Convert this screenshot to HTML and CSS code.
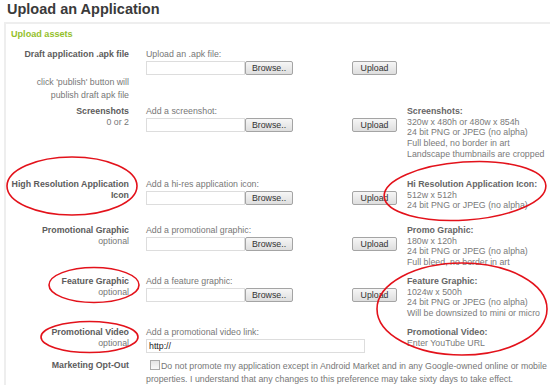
FILE: index.html
```html
<!DOCTYPE html>
<html lang="en">
<head>
  <meta charset="UTF-8" />
  <title>Upload an Application</title>
  <link rel="stylesheet" href="styles.css">
</head>
<body>
  <h1 class="page-title">Upload an Application</h1>

  <div class="panel">
    <h2 class="panel-title">Upload assets</h2>

    <div class="row row-apk">
      <div class="label">
        <b>Draft application .apk file</b>
        <p class="note">click 'publish' button will<br>publish draft apk file</p>
      </div>
      <div class="field">
        <div class="hint">Upload an .apk file:</div>
        <div class="file"><span class="file-box"></span><button class="btn btn-browse">Browse..</button></div>
      </div>
      <div class="action"><button class="btn btn-upload">Upload</button></div>
      <div class="info"></div>
    </div>

    <div class="row row-shots">
      <div class="label"><b>Screenshots</b><span>0 or 2</span></div>
      <div class="field">
        <div class="hint">Add a screenshot:</div>
        <div class="file"><span class="file-box"></span><button class="btn btn-browse">Browse..</button></div>
      </div>
      <div class="action"><button class="btn btn-upload">Upload</button></div>
      <div class="info">
        <b>Screenshots:</b>
        320w x 480h or 480w x 854h<br>
        24 bit PNG or JPEG (no alpha)<br>
        Full bleed, no border in art<br>
        Landscape thumbnails are cropped
      </div>
    </div>

    <div class="row row-icon">
      <div class="label"><b>High Resolution Application Icon</b></div>
      <div class="field">
        <div class="hint">Add a hi-res application icon:</div>
        <div class="file"><span class="file-box"></span><button class="btn btn-browse">Browse..</button></div>
      </div>
      <div class="action"><button class="btn btn-upload">Upload</button></div>
      <div class="info">
        <b>Hi Resolution Application Icon:</b>
        512w x 512h<br>
        24 bit PNG or JPEG (no alpha)
      </div>
    </div>

    <div class="row row-promo">
      <div class="label"><b>Promotional Graphic</b><span>optional</span></div>
      <div class="field">
        <div class="hint">Add a promotional graphic:</div>
        <div class="file"><span class="file-box"></span><button class="btn btn-browse">Browse..</button></div>
      </div>
      <div class="action"><button class="btn btn-upload">Upload</button></div>
      <div class="info">
        <b>Promo Graphic:</b>
        180w x 120h<br>
        24 bit PNG or JPEG (no alpha)<br>
        Full bleed, no border in art
      </div>
    </div>

    <div class="row row-feature">
      <div class="label"><b>Feature Graphic</b><span>optional</span></div>
      <div class="field">
        <div class="hint">Add a feature graphic:</div>
        <div class="file"><span class="file-box"></span><button class="btn btn-browse">Browse..</button></div>
      </div>
      <div class="action"><button class="btn btn-upload">Upload</button></div>
      <div class="info">
        <b>Feature Graphic:</b>
        1024w x 500h<br>
        24 bit PNG or JPEG (no alpha)<br>
        Will be downsized to mini or micro
      </div>
    </div>

    <div class="row row-video">
      <div class="label"><b>Promotional Video</b><span>optional</span></div>
      <div class="field field-wide">
        <div class="hint">Add a promotional video link:</div>
        <input class="text-box" type="text" value="http://">
      </div>
      <div class="info">
        <b>Promotional Video:</b>
        Enter YouTube URL
      </div>
    </div>

    <div class="row row-optout">
      <div class="label"><b>Marketing Opt-Out</b></div>
      <div class="optout">
        <span class="check"></span>Do not promote my application except in Android Market and in any Google-owned online or mobile<br>properties. I understand that any changes to this preference may take sixty days to take effect.
      </div>
    </div>
  </div>

  <svg class="marks" width="550" height="386" viewBox="0 0 550 386">
    <ellipse cx="72" cy="186" rx="65" ry="29" />
    <ellipse cx="465" cy="191" rx="81" ry="29" transform="rotate(-4 465 191)" />
    <ellipse cx="94" cy="285" rx="45" ry="17.5" />
    <ellipse cx="462" cy="309" rx="85" ry="46" />
    <ellipse cx="89.5" cy="337" rx="48.5" ry="15.5" />
  </svg>
</body>
</html>
```

FILE: styles.css
```css
body {
  margin: 0;
  padding: 0;
  background-color: #fff;
  color: #777;
  font-family: "Liberation Sans", Arial, sans-serif;
  font-size: 8.8px;
  line-height: 10.7px;
  position: relative;
}
.page-title {
  margin: 0;
  padding: 0 0 0 7px;
  font-size: 14.5px;
  line-height: 19px;
  color: #3a3a3a;
}
.panel {
  margin: 3px 0 0 4px;
  border-top: 2px solid #eee;
  border-left: 2px solid #eee;
  padding-top: 4px;
}
.panel-title {
  margin: 0 0 9px 5px;
  font-size: 9.1px;
  line-height: 12px;
  color: #94bf2b;
}
.row {
  display: grid;
  grid-template-columns: 140px 206px 55px 1fr;
  align-items: start;
}
.row-apk { height: 57px; }
.row-shots { height: 73px; }
.row-icon { height: 46px; }
.row-promo { height: 51px; }
.row-feature { height: 51px; }
.row-video { height: 33px; grid-template-columns: 140px 261px 1fr; }
.label {
  padding-right: 17px;
  text-align: right;
  color: #5c5c5c;
}
.label b,
.label span {
  display: block;
}
.label span {
  color: #777;
}
.note {
  margin: 16px 0 0 0;
  line-height: 13.5px;
  color: #777;
}
.field {
  display: flex;
  flex-direction: column;
  gap: 1px;
}
.file {
  display: flex;
}
.file-box {
  width: 97px;
  height: 12px;
  border: 1px solid #ddd;
  background-color: #fff;
}
.btn {
  height: 14px;
  padding: 0;
  border: 1px solid #a4a4a4;
  border-radius: 2px;
  background: linear-gradient(#f6f6f6, #dedede);
  color: #333;
  font-family: "Liberation Sans", Arial, sans-serif;
  font-size: 8.8px;
  line-height: 12px;
}
.btn-browse {
  width: 48px;
}
.action {
  padding-top: 12px;
}
.btn-upload {
  width: 45px;
}
.info {
  white-space: nowrap;
  color: #7a7a7a;
}
.info b {
  display: block;
  color: #666;
}
.text-box {
  width: 219px;
  height: 14px;
  box-sizing: border-box;
  margin: 0;
  padding: 0 2px;
  border: 1px solid #ddd;
  font-family: "Liberation Sans", Arial, sans-serif;
  font-size: 8.8px;
  color: #222;
}
.optout {
  grid-column: 2 / 5;
  white-space: nowrap;
  line-height: 12.5px;
}
.check {
  display: inline-block;
  width: 8px;
  height: 8px;
  margin: 0 1px 0 4px;
  vertical-align: -1px;
  border: 1px solid #aaa;
  background: linear-gradient(#e4e4e4, #f8f8f8);
}
.marks {
  position: absolute;
  left: 0;
  top: 0;
  pointer-events: none;
}
.marks ellipse {
  fill: none;
  stroke: #e3121b;
  stroke-width: 1.6;
}
```
